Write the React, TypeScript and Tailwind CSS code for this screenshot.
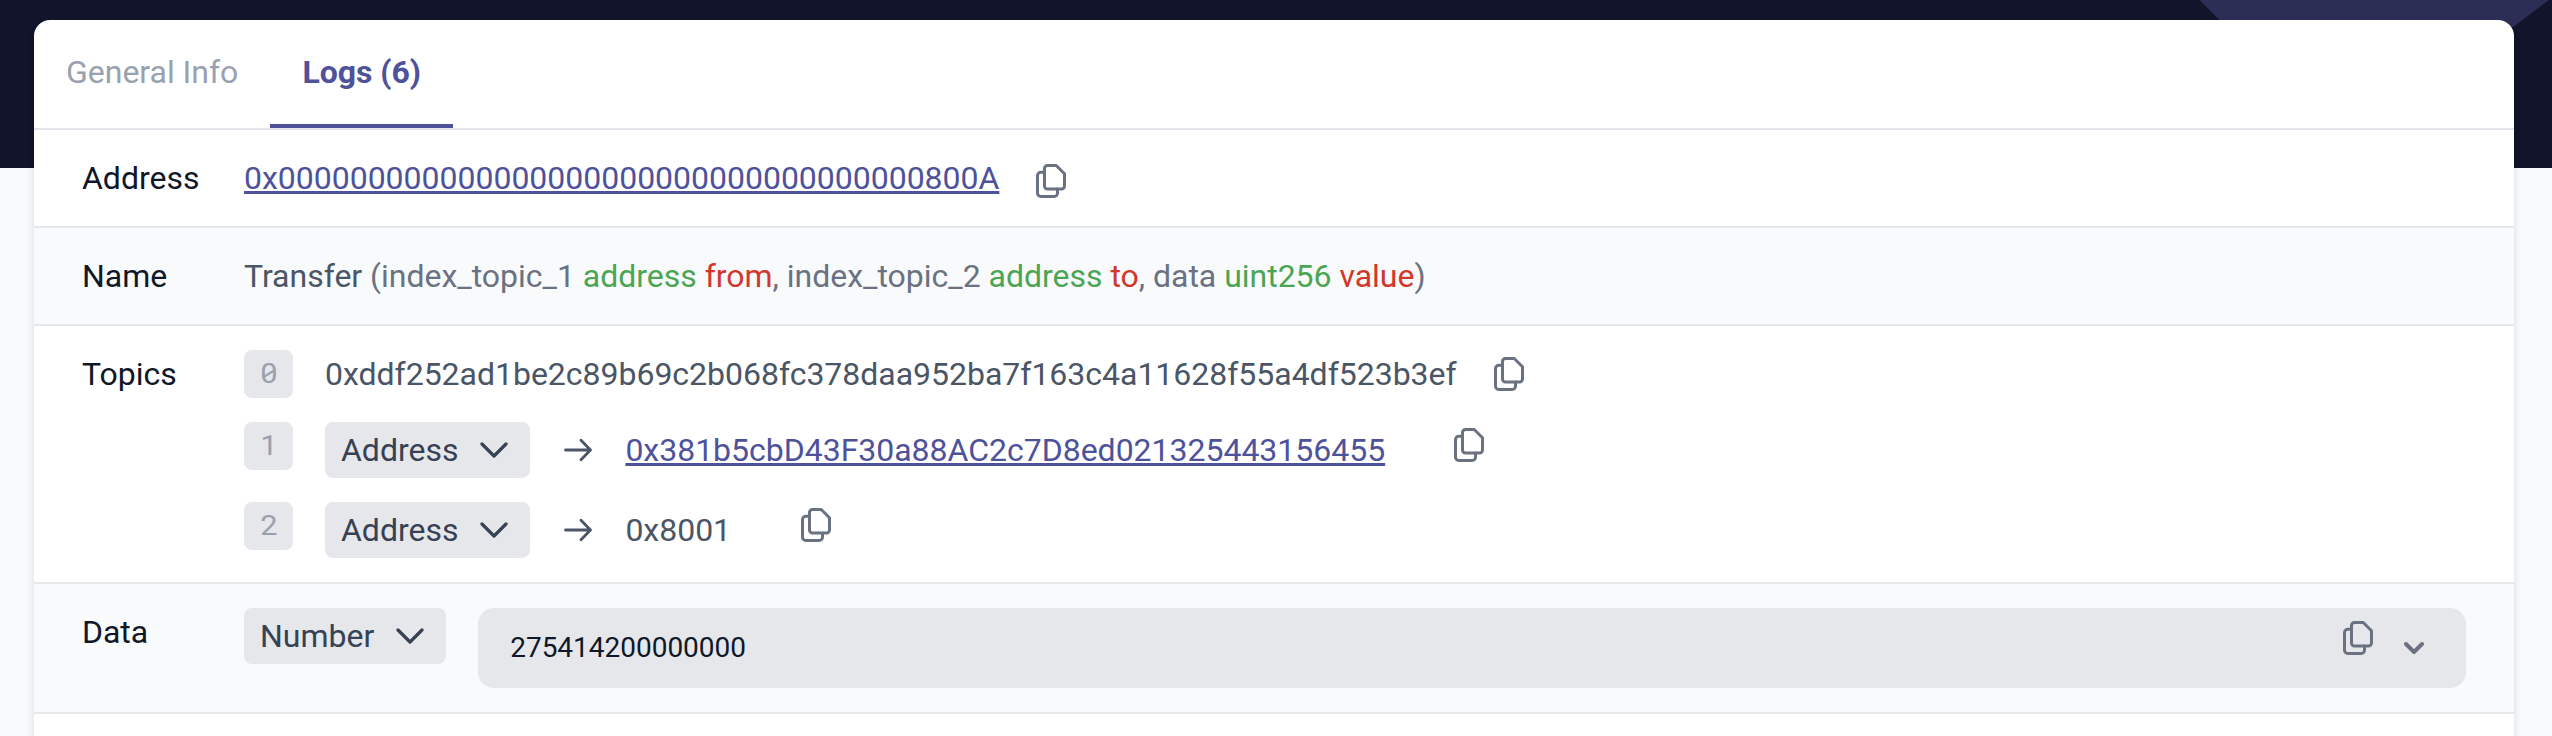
import type { ReactNode } from "react";

function CopyIcon({ className = "" }: { className?: string }) {
  return (
    <svg
      className={`h-[34px] w-[30px] shrink-0 text-gray-500 ${className}`}
      viewBox="0 0 30 34"
      fill="none"
      stroke="currentColor"
      strokeWidth="3"
      strokeLinecap="round"
      strokeLinejoin="round"
    >
      <path d="M20.2 1.5H11.5a3 3 0 0 0-3 3V22a3 3 0 0 0 3 3h14a3 3 0 0 0 3-3V9.7z" />
      <path d="M8.5 8.3H4.8a3.3 3.3 0 0 0-3.3 3.3v17.6a3.3 3.3 0 0 0 3.3 3.3h13.4a3.3 3.3 0 0 0 3.3-3.3V25" />
    </svg>
  );
}

function TypeSelect({ label }: { label: string }) {
  return (
    <button className="flex h-14 shrink-0 items-center rounded-lg bg-gray-200 pr-[22px] pl-4 text-gray-700">
      {label}
      <svg
        className="ml-[22px] h-4 w-7"
        viewBox="0 0 28 16"
        fill="none"
        stroke="currentColor"
        strokeWidth="3.2"
        strokeLinecap="round"
        strokeLinejoin="round"
      >
        <path d="M2 2l12 12L26 2" />
      </svg>
    </button>
  );
}

function Arrow() {
  return (
    <svg
      className="mr-[33px] ml-[34px] h-6 w-7 shrink-0 text-gray-600"
      viewBox="0 0 28 24"
      fill="none"
      stroke="currentColor"
      strokeWidth="2.8"
      strokeLinecap="round"
      strokeLinejoin="round"
    >
      <path d="M1.5 12H26M17 2.2l9.5 9.8-9.5 9.8" />
    </svg>
  );
}

function Badge({ index }: { index: number }) {
  return (
    <span className="relative mr-8 flex h-12 w-[49px] shrink-0 items-center justify-center self-start rounded-lg bg-gray-200 text-[28px] leading-10 text-gray-400">
      <span className="scale-x-110">{index}</span>
      {index === 0 && (
        <svg className="absolute inset-0 h-12 w-[49px]" viewBox="0 0 49 48" stroke="currentColor" strokeWidth="2.2">
          <path d="M19.2 27.4L29.4 20.8" />
        </svg>
      )}
    </span>
  );
}

function Row({ label, shaded, children }: { label: string; shaded?: boolean; children: ReactNode }) {
  return (
    <div className={`flex border-b-2 border-gray-200 px-12 py-6 ${shaded ? "bg-gray-50" : "bg-white"}`}>
      <div className="w-[162px] shrink-0 text-gray-900">{label}</div>
      <div className="min-w-0 flex-1 text-gray-600">{children}</div>
    </div>
  );
}

function Link({ children }: { children: ReactNode }) {
  return (
    <a className="text-[#4e529a] underline decoration-[3px] underline-offset-[2px] [text-decoration-skip-ink:none]" href="#">
      {children}
    </a>
  );
}

const Type = ({ children }: { children: ReactNode }) => <span className="text-[#4ba553]">{children}</span>;
const Param = ({ children }: { children: ReactNode }) => <span className="text-[#d0382e]">{children}</span>;

export default function App() {
  return (
    <div className="relative h-[736px] overflow-hidden bg-gray-50 font-['Roboto',sans-serif] text-[32px] leading-[48px] tracking-[-0.018px] whitespace-nowrap">
      <div className="absolute inset-x-0 top-0 flex h-[168px] justify-end bg-[#11142b]">
        <svg className="h-10 w-[360px]" viewBox="0 0 360 40" fill="#2d2e55">
          <path d="M7.5 0H357L303.500 40H47.500z" />
        </svg>
      </div>
      <div className="relative mt-5 mr-[38px] ml-[34px] h-[760px] overflow-hidden rounded-2xl bg-white shadow-[0_8px_12px_-2px_rgba(0,0,0,0.1),0_4px_8px_-2px_rgba(0,0,0,0.1)]">
        <div className="flex border-b-2 border-[#e4e4eb]">
          <div className="w-[236.4px] border-b-4 border-transparent px-8 py-7 text-gray-400">General Info</div>
          <div className="border-b-4 border-[#4e529a] px-8 py-7 font-bold text-[#4e529a]">Logs (6)</div>
        </div>
        <Row label="Address">
          <div className="flex">
            <Link>0x000000000000000000000000000000000000800A</Link>
            <CopyIcon className="mt-[10px] ml-[37px]" />
          </div>
        </Row>
        <Row label="Name" shaded>
          Transfer{" "}
          <span className="text-gray-500">
            (index_topic_1 <Type>address</Type> <Param>from</Param>, index_topic_2 <Type>address</Type>{" "}
            <Param>to</Param>, data <Type>uint256</Type> <Param>value</Param>)
          </span>
        </Row>
        <Row label="Topics">
          <div className="flex flex-col gap-6">
            <div className="flex h-12">
              <Badge index={0} />
              0xddf252ad1be2c89b69c2b068fc378daa952ba7f163c4a11628f55a4df523b3ef
              <CopyIcon className="mt-[7px] ml-[37px]" />
            </div>
            <div className="flex h-14 items-center">
              <Badge index={1} />
              <TypeSelect label="Address" />
              <Arrow />
              <Link>0x381b5cbD43F30a88AC2c7D8ed021325443156455</Link>
              <CopyIcon className="mt-1.5 ml-[69px] self-start" />
            </div>
            <div className="flex h-14 items-center">
              <Badge index={2} />
              <TypeSelect label="Address" />
              <Arrow />
              0x8001
              <CopyIcon className="mt-1.5 ml-[70px] self-start" />
            </div>
          </div>
        </Row>
        <Row label="Data" shaded>
          <div className="flex items-start gap-8">
            <TypeSelect label="Number" />
            <div className="flex h-20 flex-1 rounded-2xl bg-gray-200 pr-[42px] pl-8 text-[28px] leading-10 text-gray-900">
              <span className="flex-1 pt-5">275414200000000</span>
              <CopyIcon className="mt-[13px]" />
              <svg
                className="mt-[33px] ml-[31px] h-[14px] w-5 text-gray-500"
                viewBox="0 0 20 14"
                fill="none"
                stroke="currentColor"
                strokeWidth="4"
                strokeLinecap="round"
                strokeLinejoin="round"
              >
                <path d="M2 3l8 8 8-8" />
              </svg>
            </div>
          </div>
        </Row>
      </div>
    </div>
  );
}
